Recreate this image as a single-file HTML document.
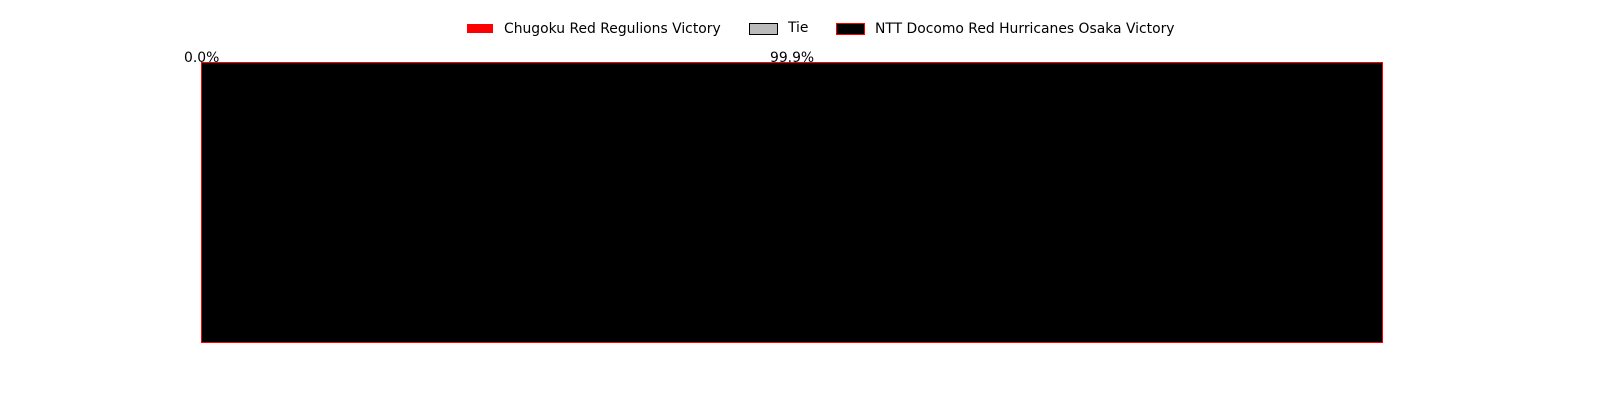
<!DOCTYPE html>
<html><head><style>
body{margin:0;width:1600px;height:400px;background:#fff;position:relative;overflow:hidden;font-family:"DejaVu Sans","Liberation Sans",sans-serif;font-size:13.9px;color:#000}
.a{position:absolute;white-space:nowrap;line-height:16px}
.p{position:absolute}
</style></head><body>
<div class="p" style="left:467px;top:24px;width:26px;height:9px;background:#f00"></div>
<div class="a" style="left:504px;top:21px">Chugoku Red Regulions Victory</div>
<div class="p" style="left:749px;top:23px;width:27px;height:10px;background:#bbb;border:1px solid #000"></div>
<div class="a" style="left:788px;top:20px">Tie</div>
<div class="p" style="left:836px;top:23px;width:27px;height:10px;background:#000;border:1px solid #f00"></div>
<div class="a" style="left:875px;top:21px">NTT Docomo Red Hurricanes Osaka Victory</div>
<div class="a" style="left:184px;top:50px">0.0%</div>
<div class="a" style="left:770px;top:50px">99.9%</div>
<div class="p" style="left:201px;top:62px;width:1180px;height:279px;background:#000;border:1px solid #f00"></div>
</body></html>
